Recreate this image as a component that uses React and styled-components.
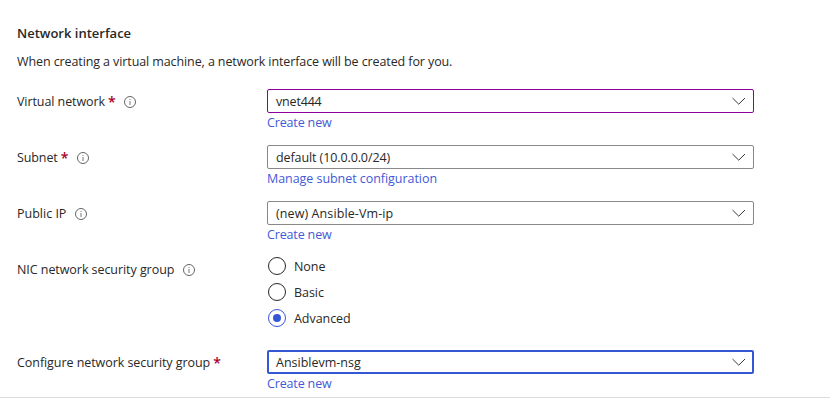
import React from "react";
import styled, { createGlobalStyle } from "styled-components";

const GlobalStyle = createGlobalStyle`
  *, *::before, *::after { box-sizing: border-box; }
  body {
    margin: 0;
    background: #fff;
    color: #292827;
    font-family: "Open Sans", "Noto Sans", sans-serif;
    font-size: 12.5px;
    line-height: 18px;
  }
`;

const Page = styled.main`
  height: 398px;
  padding: 24px 0 0 17px;
  border-bottom: 1px solid #dcdcdc;
`;

const Title = styled.h2`
  margin: 0;
  font-size: 13px;
  font-weight: 600;
  line-height: 18px;
`;

const Intro = styled.p`
  margin: 11px 0 0;
  letter-spacing: -0.1px;
`;

const Form = styled.div`
  display: flex;
  flex-direction: column;
  padding-top: 18px;
`;

const Row = styled.div`
  display: grid;
  grid-template-columns: 250px 487px;
  height: ${(p) => p.$height || 56}px;
`;

const Label = styled.div`
  display: flex;
  align-items: center;
  height: 24px;
  white-space: nowrap;
`;

const Text = styled.span`
  padding-top: 2px;
  letter-spacing: ${(p) => p.$track || 0}px;
  white-space: nowrap;
`;

const Required = styled.span`
  margin-left: 3px;
  padding-top: 1px;
  width: 7px;
  color: #a80026;
  font-size: 14px;
  font-weight: 600;
`;

const InfoSvg = styled.svg`
  display: block;
  margin: 2px 0 0 9px;
`;

const Field = styled.div`
  display: flex;
  flex-direction: column;
  align-items: flex-start;
`;

const borders = {
  edited: "1px solid #8c00a0",
  normal: "1px solid #8a8886",
  focused: "2px solid #3557d6",
};

const Select = styled.button`
  display: flex;
  align-items: center;
  justify-content: space-between;
  width: 487px;
  height: 24px;
  padding: ${(p) => (p.$state === "focused" ? "0 6px 0 7px" : "0 7px 0 8px")};
  border: ${(p) => borders[p.$state]};
  border-radius: 2px;
  background: #fff;
  color: inherit;
  font: inherit;
`;

const Link = styled.a`
  margin-top: 1px;
  color: #4359d8;
  letter-spacing: ${(p) => p.$track || 0}px;
  text-decoration: none;
`;

const RadioGroup = styled.div`
  display: flex;
  flex-direction: column;
  gap: 8px;
  padding-left: 1px;
`;

const Option = styled.div`
  display: flex;
  align-items: center;
  gap: 8px;
  height: 18px;
`;

const Dial = styled.span`
  display: grid;
  place-items: center;
  width: 18px;
  height: 18px;
  border: 1px solid ${(p) => (p.$on ? "#3557d6" : "#292827")};
  border-radius: 50%;

  &::after {
    content: "";
    width: 8px;
    height: 8px;
    border-radius: 50%;
    background: ${(p) => (p.$on ? "#3557d6" : "transparent")};
  }
`;

const Info = () => (
  <InfoSvg width="12" height="12" viewBox="0 0 12 12" fill="none">
    <circle cx="6" cy="6" r="5.5" stroke="#666" />
    <path d="M6 5v4M6 3v1" stroke="#777" />
  </InfoSvg>
);

const Chevron = () => (
  <svg width="14" height="8" viewBox="0 0 14 8" fill="none">
    <path d="M.5 1 6.75 7.2 13 1" stroke="#3b3a39" strokeWidth="1" />
  </svg>
);

const fields = [
  {
    label: "Virtual network",
    track: -0.08,
    required: true,
    info: true,
    value: "vnet444",
    valueTrack: -0.18,
    link: "Create new",
    linkTrack: -0.15,
    state: "edited",
  },
  {
    label: "Subnet",
    track: -0.1,
    required: true,
    info: true,
    value: "default (10.0.0.0/24)",
    valueTrack: -0.1,
    link: "Manage subnet configuration",
    linkTrack: -0.05,
    state: "normal",
  },
  {
    label: "Public IP",
    info: true,
    value: "(new) Ansible-Vm-ip",
    valueTrack: 0.1,
    link: "Create new",
    linkTrack: -0.15,
    state: "normal",
  },
];

const groupField = {
  label: "Configure network security group",
  track: -0.06,
  required: true,
  value: "Ansiblevm-nsg",
  link: "Create new",
  linkTrack: -0.15,
  state: "focused",
};

const SelectRow = ({ field }) => (
  <Row>
    <Label>
      <Text $track={field.track}>{field.label}</Text>
      {field.required && <Required>*</Required>}
      {field.info && <Info />}
    </Label>
    <Field>
      <Select type="button" $state={field.state}>
        <Text $track={field.valueTrack}>{field.value}</Text>
        <Chevron />
      </Select>
      <Link $track={field.linkTrack}>{field.link}</Link>
    </Field>
  </Row>
);

export default function App() {
  return (
    <>
      <GlobalStyle />
      <Page>
        <Title>Network interface</Title>
        <Intro>When creating a virtual machine, a network interface will be created for you.</Intro>
        <Form>
          {fields.map((field) => (
            <SelectRow key={field.label} field={field} />
          ))}
          <Row $height={93}>
            <Label>
              <Text $track={-0.06}>NIC network security group</Text>
              <Info />
            </Label>
            <RadioGroup role="radiogroup">
              {["None", "Basic", "Advanced"].map((name) => (
                <Option key={name} role="radio" aria-checked={name === "Advanced"}>
                  <Dial $on={name === "Advanced"} />
                  <Text $track={-0.05}>{name}</Text>
                </Option>
              ))}
            </RadioGroup>
          </Row>
          <SelectRow field={groupField} />
        </Form>
      </Page>
    </>
  );
}
